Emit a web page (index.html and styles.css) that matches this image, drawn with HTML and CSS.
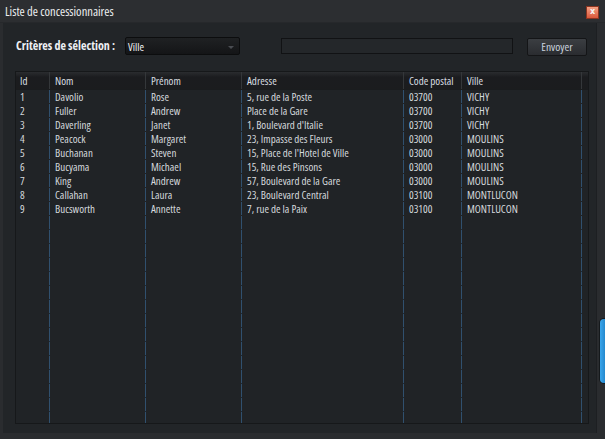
FILE: index.html
```html
<!DOCTYPE html>
<html lang="fr">
<head>
<meta charset="utf-8">
<title>Liste de concessionnaires</title>
<link rel="stylesheet" href="styles.css">
</head>
<body>
<div class="titlebar">
  <span class="title">Liste de concessionnaires</span>
  <span class="close">x</span>
</div>
<div class="frame">
  <div class="main">
    <div class="toolbar">
      <span class="label">Critères de sélection :</span>
      <div class="select"><span>Ville</span><span class="arrow"></span></div>
      <div class="input"></div>
      <div class="button">Envoyer</div>
    </div>
    <div class="grid">
      <div class="row head">
        <div class="c">Id</div><div class="c">Nom</div><div class="c">Prénom</div><div class="c">Adresse</div><div class="c">Code postal</div><div class="c">Ville</div><div class="c"></div>
      </div>
      <div class="rows">
        <div class="row"><div class="c">1</div><div class="c">Davolio</div><div class="c">Rose</div><div class="c">5, rue de la Poste</div><div class="c">03700</div><div class="c">VICHY</div><div class="c"></div></div>
        <div class="row"><div class="c">2</div><div class="c">Fuller</div><div class="c">Andrew</div><div class="c">Place de la Gare</div><div class="c">03700</div><div class="c">VICHY</div><div class="c"></div></div>
        <div class="row"><div class="c">3</div><div class="c">Daverling</div><div class="c">Janet</div><div class="c">1, Boulevard d'Italie</div><div class="c">03700</div><div class="c">VICHY</div><div class="c"></div></div>
        <div class="row"><div class="c">4</div><div class="c">Peacock</div><div class="c">Margaret</div><div class="c">23, Impasse des Fleurs</div><div class="c">03000</div><div class="c">MOULINS</div><div class="c"></div></div>
        <div class="row"><div class="c">5</div><div class="c">Buchanan</div><div class="c">Steven</div><div class="c">15, Place de l'Hotel de Ville</div><div class="c">03000</div><div class="c">MOULINS</div><div class="c"></div></div>
        <div class="row"><div class="c">6</div><div class="c">Bucyama</div><div class="c">Michael</div><div class="c">15, Rue des Pinsons</div><div class="c">03000</div><div class="c">MOULINS</div><div class="c"></div></div>
        <div class="row"><div class="c">7</div><div class="c">King</div><div class="c">Andrew</div><div class="c">57, Boulevard de la Gare</div><div class="c">03000</div><div class="c">MOULINS</div><div class="c"></div></div>
        <div class="row"><div class="c">8</div><div class="c">Callahan</div><div class="c">Laura</div><div class="c">23, Boulevard Central</div><div class="c">03100</div><div class="c">MONTLUCON</div><div class="c"></div></div>
        <div class="row"><div class="c">9</div><div class="c">Bucsworth</div><div class="c">Annette</div><div class="c">7, rue de la Paix</div><div class="c">03100</div><div class="c">MONTLUCON</div><div class="c"></div></div>
        <div class="row filler"><div class="c"></div><div class="c"></div><div class="c"></div><div class="c"></div><div class="c"></div><div class="c"></div><div class="c"></div></div>
      </div>
    </div>
  </div>
  <div class="side"><span class="thumb"></span></div>
</div>
</body>
</html>
```

FILE: styles.css
```css
html, body {
  margin: 0;
  padding: 0;
}
body {
  width: 605px;
  height: 439px;
  overflow: hidden;
  background: #2a2c2f;
  font-family: "Open Sans", "Liberation Sans", Arial, sans-serif;
  font-stretch: 75%;
  font-size: 11px;
  color: #d4d8dc;
  display: flex;
  flex-direction: column;
}
.titlebar {
  height: 23px;
  flex: none;
  display: flex;
  align-items: center;
  justify-content: space-between;
  padding: 0 6px 0 5px;
  background: #2c2e31;
  border-bottom: 1px solid #26282b;
  box-sizing: border-box;
}
.title {
  font-size: 12.5px;
  color: #eceef0;
}
.close {
  width: 11px;
  height: 11px;
  margin-top: 3px;
  border: 1px solid #8a3420;
  background: linear-gradient(#f5a184, #d9573a);
  color: #f4f4f4;
  font-family: "DejaVu Sans", sans-serif;
  font-stretch: normal;
  font-size: 8px;
  font-weight: bold;
  line-height: 10px;
  text-align: center;
}
.frame {
  flex: 1;
  display: flex;
  margin: 0 0 6px 3px;
}
.main {
  flex: 1;
  background: #222528;
  display: flex;
  flex-direction: column;
  padding: 0 7px 9px 12px;
}
.side {
  width: 8px;
  position: relative;
  background: #2a2c2f;
  border-left: 1px solid #1d1f22;
}
.thumb {
  position: absolute;
  left: 3px;
  top: 296px;
  width: 8px;
  height: 64px;
  border-radius: 4px;
  background: linear-gradient(90deg, #3aa6ec, #1877bb);
  box-shadow: 0 0 0 1px #15191c;
}
.toolbar {
  height: 48px;
  flex: none;
  display: flex;
  align-items: flex-start;
  padding: 14px 0 0 1px;
  box-sizing: border-box;
}
.label {
  width: 109px;
  flex: none;
  line-height: 17px;
  font-size: 12px;
  font-weight: bold;
  white-space: nowrap;
  color: #eef0f4;
}
.select {
  width: 115px;
  height: 18px;
  flex: none;
  box-sizing: border-box;
  border: 1px solid #0c0d0e;
  border-radius: 2px;
  background: linear-gradient(#1f2123, #141517);
  display: flex;
  align-items: center;
  justify-content: space-between;
  padding: 0 5px 0 2px;
  color: #f0f2f4;
}
.arrow {
  width: 0;
  height: 0;
  margin-top: 2px;
  border-left: 3px solid transparent;
  border-right: 3px solid transparent;
  border-top: 3px solid #4a4d52;
}
.input {
  width: 232px;
  height: 16px;
  flex: none;
  margin: 1px 0 0 41px;
  box-sizing: border-box;
  border: 1px solid #111214;
  background: #24272a;
}
.button {
  width: 60px;
  height: 18px;
  flex: none;
  margin: 1px 0 0 14px;
  box-sizing: border-box;
  border: 1px solid #141517;
  border-radius: 2px;
  background: linear-gradient(#3b3e42, #2a2c30);
  color: #c9d1de;
  text-align: center;
  line-height: 16px;
  font-size: 11.5px;
}
.grid {
  flex: 1;
  display: flex;
  flex-direction: column;
  border: 1px solid #16181a;
  background: #202326;
}
.row {
  display: grid;
  grid-template-columns: 33px 96px 96px 162px 58px 120px 1fr;
  height: 14px;
  line-height: 14px;
}
.c {
  padding-left: 5px;
  white-space: nowrap;
  overflow: hidden;
}
.c:first-child {
  padding-left: 4px;
}
.head {
  height: 18px;
  line-height: 17px;
  box-sizing: border-box;
  background: linear-gradient(#2a2c2f, #1b1c1f 30%, #1b1c1e);
  color: #d8dce0;
  border-bottom: 1px solid #1a1c1e;
}
.head .c + .c {
  border-left: 1px solid #34373a;
}
.rows {
  flex: 1;
  display: flex;
  flex-direction: column;
}
.rows .c + .c {
  padding-left: 6px;
  background: linear-gradient(#30506e, #30506e) left top / 1px 13px no-repeat;
}
.rows .filler {
  flex: 1;
  height: auto;
}
.rows .filler .c + .c {
  background: repeating-linear-gradient(#30506e 0 13px, #1c2a37 13px 14px) left top / 1px 100% no-repeat;
}
```
